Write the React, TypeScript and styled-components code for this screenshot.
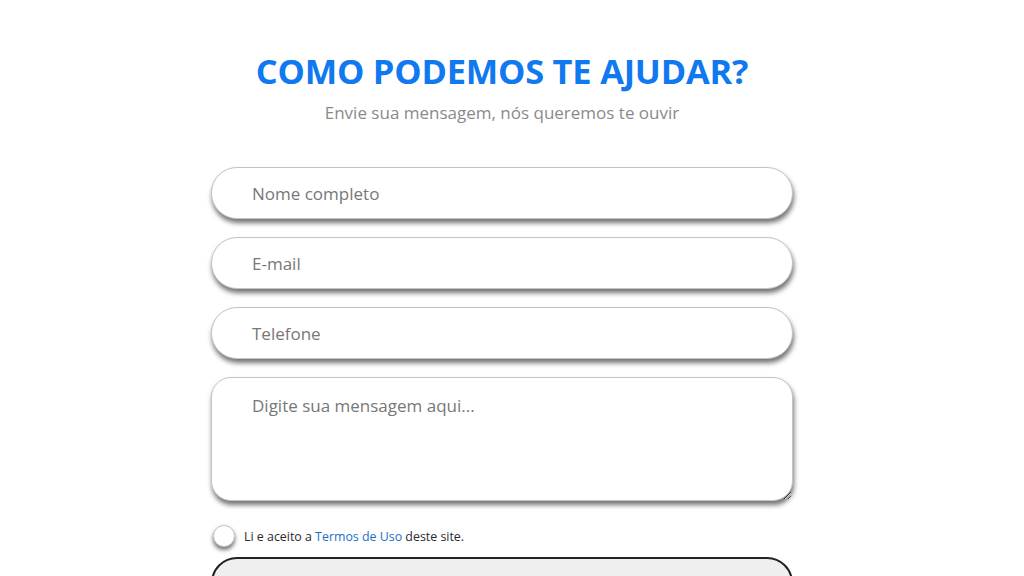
import * as React from "react";
import { useState } from "react";
import styled, { createGlobalStyle } from "styled-components";

const GlobalStyle = createGlobalStyle`
  body {
    margin: 0;
    background: #ffffff;
    font-family: "Open Sans", "Noto Sans", sans-serif;
  }
`;

const App: React.FC = () => {
  const [accepted, setAccepted] = useState(false);

  return (
    <Page>
      <GlobalStyle />
      <Title>COMO PODEMOS TE AJUDAR?</Title>
      <Subtitle>Envie sua mensagem, nós queremos te ouvir</Subtitle>
      <Form onSubmit={(e) => e.preventDefault()}>
        <Fields>
          <Field type="text" placeholder="Nome completo" />
          <Field type="email" placeholder="E-mail" />
          <Field type="tel" placeholder="Telefone" />
          <Message placeholder="Digite sua mensagem aqui..." />
        </Fields>
        <Terms>
          <Radio
            type="checkbox"
            checked={accepted}
            onChange={() => setAccepted(!accepted)}
          />
          <span>
            Li e aceito a <a href="#">Termos de Uso</a> deste site.
          </span>
        </Terms>
        <Submit type="submit" value="" />
      </Form>
    </Page>
  );
};

export default App;

/* Styles */
const Page = styled.main`
  display: flex;
  flex-direction: column;
  align-items: center;
  padding: 47px 20px 0 0;
  height: 576px;
  box-sizing: border-box;
  overflow: hidden;
`;

const Title = styled.h1`
  margin: 0;
  font-size: 34.4px;
  font-weight: 700;
  color: #1079f0;
  letter-spacing: -0.2px;
`;

const Subtitle = styled.p`
  margin: 7px 0 0;
  font-size: 17px;
  color: #8a8a8a;
`;

const Form = styled.form`
  width: 582px;
  margin-top: 43px;
  display: flex;
  flex-direction: column;
`;

const Fields = styled.div`
  display: flex;
  flex-direction: column;
  gap: 18px;
`;

const Field = styled.input`
  box-sizing: border-box;
  height: 52px;
  width: 100%;
  padding: 0 40px;
  border: 1px solid #c4c4c4;
  border-radius: 26px;
  background: #fff;
  box-shadow: 1px 4px 5px rgba(0, 0, 0, 0.55);
  font-family: inherit;
  font-size: 17px;
  color: #333;
  outline: none;
  &::placeholder {
    color: #777;
  }
`;

const Message = styled.textarea`
  box-sizing: border-box;
  height: 124px;
  width: 100%;
  padding: 16px 40px;
  border: 1px solid #c4c4c4;
  border-radius: 20px;
  background: #fff;
  box-shadow: 1px 4px 5px rgba(0, 0, 0, 0.55);
  font-family: inherit;
  font-size: 17px;
  color: #333;
  outline: none;
  &::placeholder {
    color: #777;
  }
`;

const Terms = styled.label`
  display: flex;
  align-items: center;
  gap: 9px;
  margin: 24px 0 10px;
  padding-left: 2px;
  font-size: 12.4px;
  color: #2a2a2a;
  a {
    color: #1a6fc9;
    text-decoration: none;
  }
`;

const Radio = styled.input`
  appearance: none;
  margin: 0;
  width: 22px;
  height: 22px;
  border-radius: 50%;
  border: 1px solid #c4c4c4;
  background: #fff;
  box-shadow: 0 3px 4px rgba(0, 0, 0, 0.55);
  cursor: pointer;
  &:checked {
    background: #1079f0;
  }
`;

const Submit = styled.input`
  box-sizing: border-box;
  height: 52px;
  width: 100%;
  border: 2px solid #222;
  border-radius: 26px;
  background: #efefef;
  font-family: inherit;
  font-size: 17px;
`;
